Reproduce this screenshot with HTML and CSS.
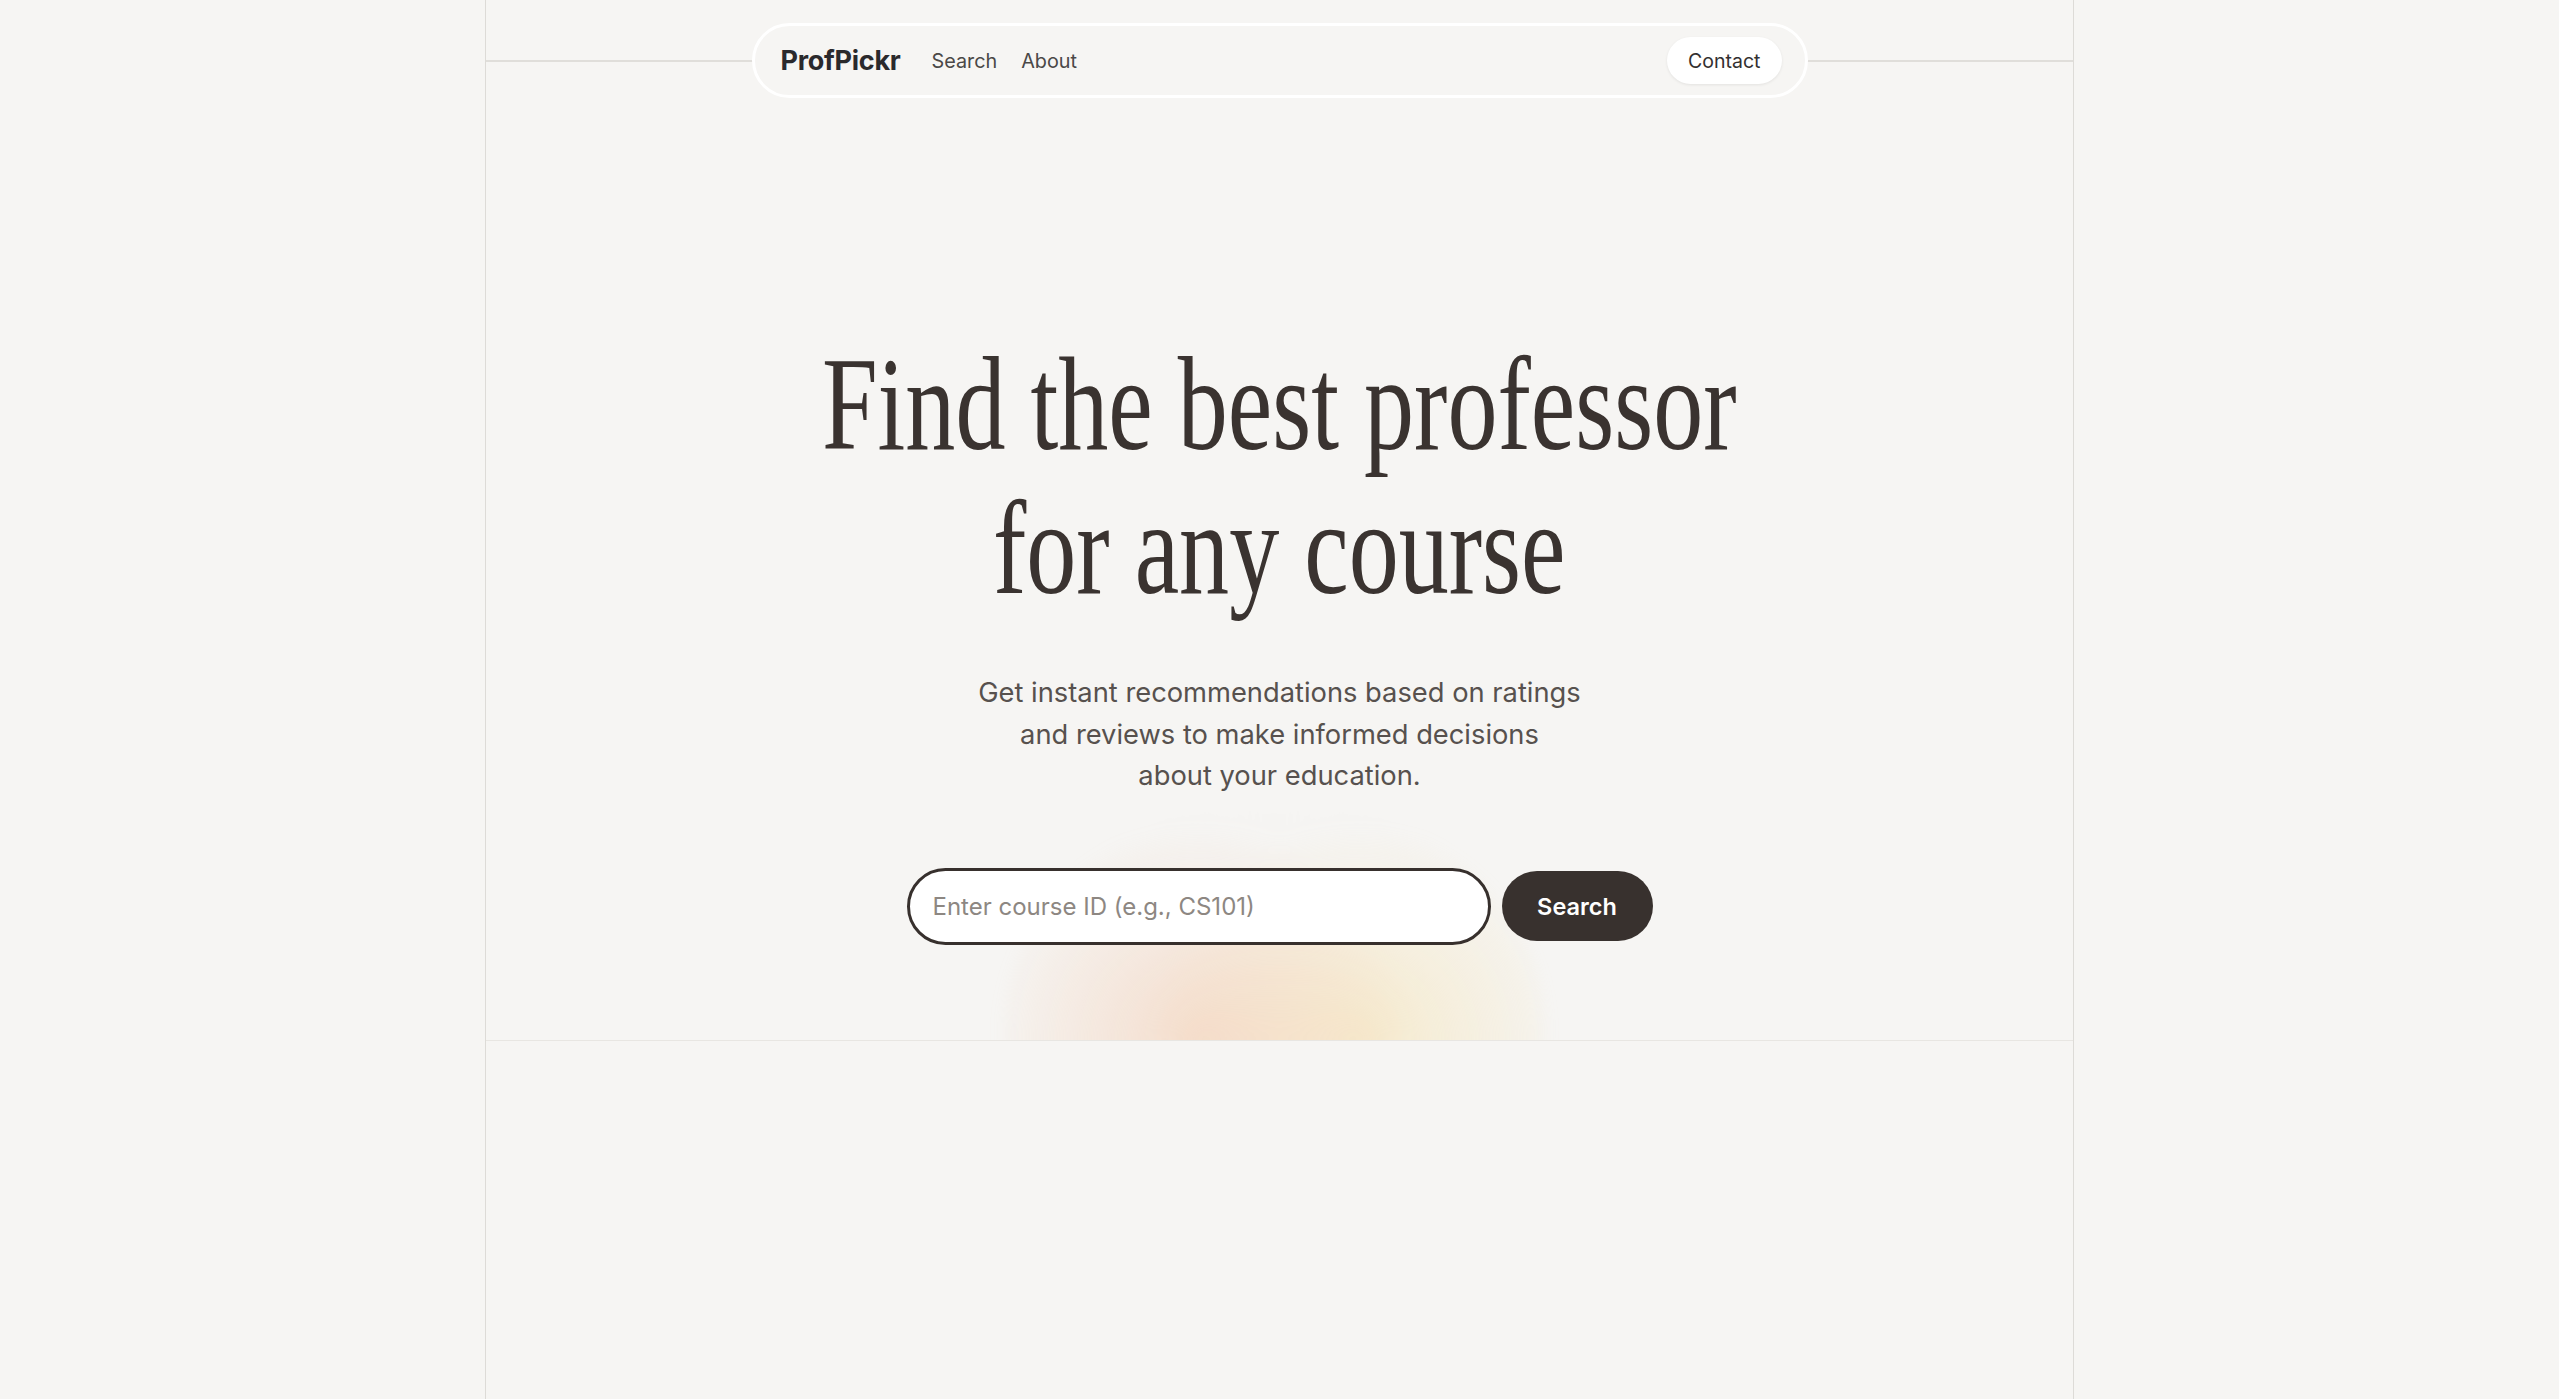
FILE: index.html
```html
<!DOCTYPE html>
<html lang="en">
<head>
<meta charset="utf-8">
<title>ProfPickr</title>
<link rel="stylesheet" href="styles.css">
</head>
<body>
<div class="frame">
  <header class="header">
    <nav class="nav">
      <span class="logo">ProfPickr</span>
      <a class="nav-link nav-link-first" href="#">Search</a>
      <a class="nav-link" href="#">About</a>
      <a class="contact" href="#">Contact</a>
    </nav>
  </header>
  <section class="hero">
    <div class="glow"></div>
    <div class="hero-content">
      <h1 class="title">Find the best professor<br>for any course</h1>
      <p class="subtitle">Get instant recommendations based on ratings<br>and reviews to make informed decisions<br>about your education.</p>
      <form class="search" onsubmit="return false">
        <input class="search-input" type="text" placeholder="Enter course ID (e.g., CS101)" autofocus>
        <button class="search-btn" type="submit">Search</button>
      </form>
    </div>
  </section>
</div>
</body>
</html>
```
FILE: styles.css
```css
html, body {
  margin: 0;
  padding: 0;
  background: #f6f5f3;
}
body {
  font-family: Inter, "Noto Sans", sans-serif;
  color: #3a3330;
}
.frame {
  box-sizing: border-box;
  width: 1589px;
  margin: 0 auto;
  min-height: 100vh;
  border-left: 1px solid #dddbd7;
  border-right: 1px solid #dddbd7;
}
.header {
  box-sizing: border-box;
  height: 120px;
  padding-top: 23px;
  display: flex;
  justify-content: center;
  align-items: flex-start;
  background: linear-gradient(#e0deda, #e0deda) no-repeat 0 60px / 100% 2px;
}
.nav {
  box-sizing: border-box;
  width: 1056px;
  height: 75px;
  border: 3px solid #ffffff;
  border-radius: 999px;
  background: #f6f5f3;
  display: flex;
  align-items: center;
  padding: 0 23px 0 26px;
}
.logo {
  font-size: 27px;
  font-weight: 700;
  color: #2a292c;
  letter-spacing: -0.01em;
}
.nav-link {
  font-size: 19.8px;
  color: #4a4847;
  text-decoration: none;
  margin-left: 24px;
}
.nav-link-first {
  margin-left: 31px;
}
.contact {
  margin-left: auto;
  height: 47px;
  display: flex;
  align-items: center;
  padding: 0 21px;
  background: #ffffff;
  border-radius: 999px;
  font-size: 19.5px;
  color: #333030;
  text-decoration: none;
  box-shadow: 0 1px 3px rgba(0, 0, 0, 0.08);
}
.hero {
  position: relative;
  overflow: hidden;
  box-sizing: border-box;
  height: 921px;
  padding-top: 212px;
  border-bottom: 1px solid #e8e6e2;
}
.glow {
  position: absolute;
  left: 50%;
  bottom: -220px;
  width: 540px;
  height: 460px;
  margin-left: -276px;
  border-radius: 50%;
  background:
    repeating-radial-gradient(circle at 50% 50%, rgba(120, 90, 60, 0.022) 0 1px, transparent 1px 11px),
    radial-gradient(ellipse 40% 46% at 36% 52%, rgba(244, 206, 180, 0.6), rgba(244, 206, 180, 0) 100%),
    radial-gradient(ellipse 40% 46% at 66% 52%, rgba(246, 228, 180, 0.6), rgba(246, 228, 180, 0) 100%);
  filter: blur(8px);
}
.hero-content {
  position: relative;
  display: flex;
  flex-direction: column;
  align-items: center;
  text-align: center;
}
.title {
  margin: 0;
  font-family: "Liberation Serif", "Times New Roman", serif;
  font-weight: 400;
  font-size: 134px;
  line-height: 144px;
  color: #3a3330;
  transform: scaleX(0.747);
  white-space: nowrap;
}
.subtitle {
  margin: 52px 0 0;
  font-size: 27.3px;
  line-height: 41.6px;
  color: #57514e;
}
.search {
  margin-top: 71px;
  display: flex;
  align-items: center;
  gap: 11px;
}
.search-input {
  box-sizing: border-box;
  width: 584px;
  height: 77px;
  border: 3px solid #37302d;
  border-radius: 999px;
  padding: 0 23px;
  background: #ffffff;
  font-family: Inter, "Noto Sans", sans-serif;
  font-size: 24px;
  color: #3a3330;
  outline: none;
}
.search-input::placeholder {
  color: #8d8782;
}
.search-btn {
  width: 151px;
  height: 70px;
  border: none;
  border-radius: 999px;
  background: #38312e;
  color: #ffffff;
  font-family: Inter, "Noto Sans", sans-serif;
  font-size: 23.5px;
  font-weight: 600;
  cursor: pointer;
}
```
